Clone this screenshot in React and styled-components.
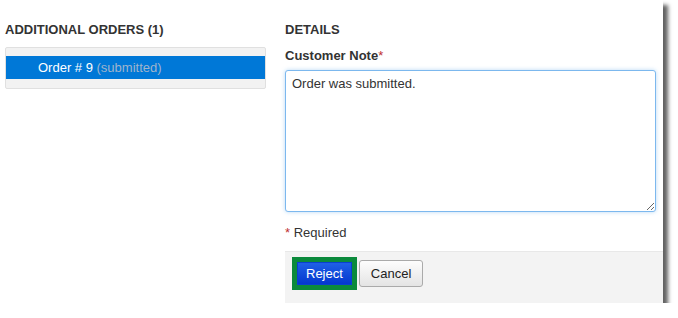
import styled, { createGlobalStyle } from "styled-components"

const Global = createGlobalStyle`
    body {
        margin: 0;
        background: #fff;
        font-family: "Liberation Sans", Arial, sans-serif;
        color: #333;
    }
`

const Card = styled.div`
    width: 663px;
    height: 303px;
    background: #fff;
    display: flex;
    box-shadow: 5px 5px 4px rgba(0, 0, 0, 0.62);
`

const Left = styled.div`
    width: 261px;
    padding: 21px 0 0 5px;
`

const Right = styled.div`
    flex: 1;
    margin-left: 19px;
    padding-top: 21px;
    display: flex;
    flex-direction: column;
`

const Heading = styled.h3`
    margin: 0;
    font-size: 13px;
    line-height: 17px;
    font-weight: bold;
    color: #333;
`

const List = styled.ul`
    list-style: none;
    margin: 9px 0 0;
    padding: 8px 0 9px;
    background: #f2f2f2;
    border: 1px solid #e0e0e0;
    border-radius: 2px;
`

const Item = styled.li`
    height: 23px;
    line-height: 23px;
    padding-left: 32px;
    font-size: 13px;
    color: ${({ active }) => (active ? "#fff" : "#333")};
    background: ${({ active }) => (active ? "#0078d7" : "transparent")};
`

const Status = styled.span`
    color: #9fb4cc;
`

const Label = styled.label`
    display: block;
    margin-top: 9px;
    font-size: 13px;
    line-height: 17px;
    font-weight: bold;
`

const Star = styled.span`
    color: #c03030;
    font-weight: normal;
`

const Note = styled.textarea`
    box-sizing: border-box;
    width: 371px;
    height: 142px;
    margin-top: 6px;
    padding: 5px 6px;
    font-family: "Liberation Sans", Arial, sans-serif;
    font-size: 13px;
    color: #333;
    border: 1px solid #7cb8ee;
    border-radius: 3px;
    box-shadow: 0 0 4px rgba(100, 170, 235, 0.45);
    outline: none;
    resize: vertical;
`

const Hint = styled.div`
    margin-top: 12px;
    font-size: 13px;
    line-height: 17px;
    color: #333;
`

const Footer = styled.div`
    margin-top: auto;
    height: 52px;
    box-sizing: border-box;
    background: #f3f3f3;
    border-top: 1px solid #e8e8e8;
    display: flex;
    align-items: flex-start;
    padding: 5px 0 0 7px;
    gap: 2px;
`

const Focus = styled.div`
    border: 5px solid #0b8a3c;
    display: flex;
`

const Button = styled.button`
    font-family: "Liberation Sans", Arial, sans-serif;
    font-size: 13px;
    margin-top: ${({ primary }) => (primary ? "0" : "3px")};
    border-radius: ${({ primary }) => (primary ? "0" : "3px")};
    height: ${({ primary }) => (primary ? "23px" : "27px")};
    padding: 0 ${({ primary }) => (primary ? "8px" : "11px")};
    color: ${({ primary }) => (primary ? "#fff" : "#222")};
    border: 1px solid ${({ primary }) => (primary ? "#0a3fd0" : "#aaa")};
    background: ${({ primary }) =>
        primary
            ? "linear-gradient(#1f60e6, #0438cf)"
            : "linear-gradient(#fdfdfd, #e4e4e4)"};
`

export default function App() {
    return (
        <>
            <Global />
            <Card>
                <Left>
                    <Heading>ADDITIONAL ORDERS (1)</Heading>
                    <List>
                        <Item active>
                            Order # 9 <Status>(submitted)</Status>
                        </Item>
                    </List>
                </Left>
                <Right>
                    <Heading>DETAILS</Heading>
                    <Label>
                        Customer Note<Star>*</Star>
                    </Label>
                    <Note defaultValue="Order was submitted." />
                    <Hint>
                        <Star>*</Star> Required
                    </Hint>
                    <Footer>
                        <Focus>
                            <Button primary>Reject</Button>
                        </Focus>
                        <Button>Cancel</Button>
                    </Footer>
                </Right>
            </Card>
        </>
    )
}
